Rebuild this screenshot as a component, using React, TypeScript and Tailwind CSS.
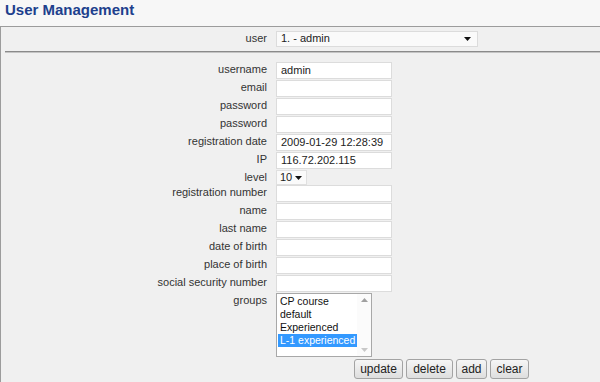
import React from "react";

const fields: { label: string; value?: string; kind?: "level" }[] = [
  { label: "username", value: "admin" },
  { label: "email" },
  { label: "password" },
  { label: "password" },
  { label: "registration date", value: "2009-01-29 12:28:39" },
  { label: "IP", value: "116.72.202.115" },
  { label: "level", kind: "level" },
  { label: "registration number" },
  { label: "name" },
  { label: "last name" },
  { label: "date of birth" },
  { label: "place of birth" },
  { label: "social security number" },
];

const groups = ["CP course", "default", "Experienced", "L-1 experienced"];

function Arrow() {
  return (
    <svg width="7" height="4" viewBox="0 0 7 4" className="shrink-0">
      <path d="M0 0h7L3.5 4z" fill="#111" />
    </svg>
  );
}

function Btn({ label, w }: { label: string; w: string }) {
  return (
    <button
      className={`${w} h-[20px] rounded-[3px] border border-[#a3a3a3] bg-gradient-to-b from-[#f6f6f6] to-[#dedede] text-[12px] leading-none text-[#222] flex items-center justify-center [font-family:'Liberation_Sans',Arial,sans-serif]`}
    >
      {label}
    </button>
  );
}

export default function App() {
  return (
    <div className="w-[600px] h-[382px] overflow-hidden bg-[#f7f7f7] [font-family:'Liberation_Sans',Arial,sans-serif] text-[#333]">
      <h1 className="h-[26px] pl-[5px] pt-[1px] text-[15px] leading-[18px] font-bold text-[#203f8d]">
        User Management
      </h1>

      <div className="h-[356px] border-t border-l border-[#9c9c9c] bg-[#f0f0f0]">
        {/* user selector */}
        <div className="flex items-center pt-[3px] h-[20px]">
          <span className="w-[266px] text-right text-[11px]">user</span>
          <div className="ml-[9px] w-[202px] h-[16px] flex items-center justify-between bg-[#fafafa] border border-[#dcdcdc] pl-[4px] pr-[6px] text-[11px] text-[#222]">
            <span>1. - admin</span>
            <Arrow />
          </div>
        </div>
        <div className="mt-[4px] ml-[4px] h-[2px] border-t border-[#8a8a8a] border-b border-b-[#c4c4c4]" />

        {/* form */}
        <div className="pt-[9px] flex flex-col">
          {fields.map((f, i) => (
            <div
              key={i}
              className={`flex items-start ${f.kind === "level" ? "h-[15px]" : "h-[18px]"}`}
            >
              <span className="w-[266px] text-right text-[11px] leading-[15px]">{f.label}</span>
              {f.kind === "level" ? (
                <div className="ml-[9px] w-[31px] h-[15px] flex items-center justify-between bg-[#fafafa] border border-[#e0e0e0] pl-[3px] pr-[4px] text-[11px] text-[#222]">
                  <span>10</span>
                  <Arrow />
                </div>
              ) : (
                <div className="ml-[9px] w-[116px] h-[17px] flex items-center bg-white border border-[#dcdcdc] pl-[4px] text-[11px] text-[#222]">
                  {f.value}
                </div>
              )}
            </div>
          ))}

          {/* groups */}
          <div className="flex items-start">
            <span className="w-[266px] text-right text-[11px] leading-[14px]">groups</span>
            <div className="ml-[9px] w-[96px] h-[64px] flex bg-white border border-[#a8a8a8] overflow-hidden">
              <div className="flex-1 min-w-0 pt-[1px] pl-[1px]">
                {groups.map((g, i) => (
                  <div
                    key={g}
                    className={`h-[13px] pl-[2px] text-[10.5px] leading-[13px] whitespace-nowrap ${
                      i === 3 ? "bg-[#3399ff] text-white" : "text-[#111]"
                    }`}
                  >
                    {g}
                  </div>
                ))}
              </div>
              <div className="w-[14px] shrink-0 flex flex-col justify-between items-center py-[4px] bg-[#fbfbfb]">
                <svg width="7" height="4" viewBox="0 0 7 4">
                  <path d="M0 4h7L3.5 0z" fill="#a0a0a0" />
                </svg>
                <svg width="7" height="4" viewBox="0 0 7 4">
                  <path d="M0 0h7L3.5 4z" fill="#c8c8c8" />
                </svg>
              </div>
            </div>
          </div>

          {/* buttons */}
          <div className="flex gap-[3px] ml-[353px] mt-[2px]">
            <Btn label="update" w="w-[49px]" />
            <Btn label="delete" w="w-[47px]" />
            <Btn label="add" w="w-[31px]" />
            <Btn label="clear" w="w-[39px]" />
          </div>
        </div>
      </div>
    </div>
  );
}
